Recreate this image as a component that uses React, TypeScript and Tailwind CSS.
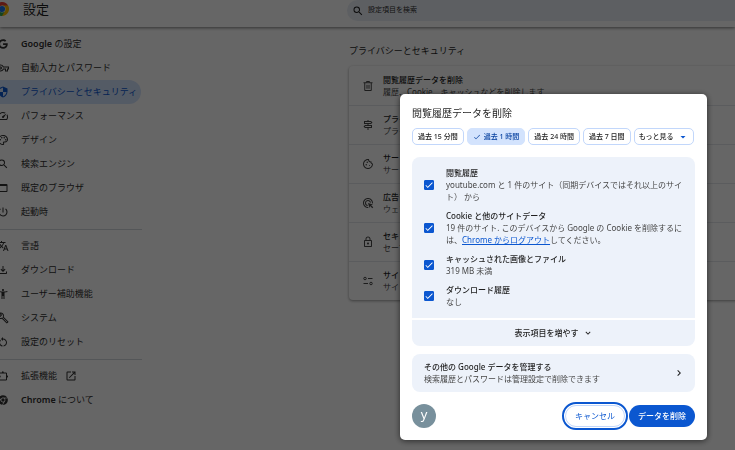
import React from 'react'
import {
  MdAccessibilityNew,
  MdAdsClick,
  MdArrowDropDown,
  MdCheck,
  MdKeyboardArrowDown,
  MdKeyboardArrowRight,
  MdLockOutline,
  MdOpenInNew,
  MdOutlineBuild,
  MdOutlineCookie,
  MdOutlineFileDownload,
  MdOutlinePalette,
  MdOutlineSignpost,
  MdOutlineSpeed,
  MdOutlineVpnKey,
  MdOutlineWebAsset,
  MdPowerSettingsNew,
  MdRestartAlt,
  MdSearch,
  MdSecurity,
  MdTranslate,
} from 'react-icons/md'
import { FaChrome, FaGoogle } from 'react-icons/fa'

type IconType = React.ComponentType<{ className?: string }>

interface NavItem {
  brand?: string
  label: string
  icon: IconType
  active?: boolean
  external?: boolean
}

const GoogleIcon: IconType = ({ className }) => <FaGoogle className={`${className} p-px`} />
const AboutIcon: IconType = ({ className }) => <FaChrome className={`${className} p-px`} />

const ExtensionIcon: IconType = ({ className }) => (
  <svg viewBox="0 0 24 24" className={className} fill="none" stroke="currentColor" strokeWidth="2">
    <path d="M4 6h15v14H4v-4.5a2.5 2.5 0 0 0 0-5z" strokeLinejoin="round" />
    <path d="M9.5 5.5a2 2 0 0 1 4 0zM19.5 11a2 2 0 0 1 0 4z" fill="currentColor" stroke="none" />
    <path d="M11.5 3v3M19 13h3" strokeWidth="3" />
  </svg>
)

const TrashIcon: IconType = ({ className }) => (
  <svg viewBox="0 0 24 24" className={className} fill="none" stroke="currentColor" strokeWidth="2">
    <path d="M3 5.500h18M9 5V3h6v2M5.500 6v15h13V6M10 9.500v8M14 9.500v8" />
  </svg>
)

const SiteSettingsIcon: IconType = ({ className }) => (
  <svg viewBox="0 0 24 24" className={className} fill="none" stroke="currentColor" strokeWidth="2">
    <circle cx="6" cy="7" r="2.5" />
    <path d="M12 7h9M3 17h9" />
    <circle cx="18" cy="17" r="2.5" />
  </svg>
)

const ChromeLogo = () => (
  <svg viewBox="0 0 48 48" className="size-[14px] shrink-0">
    <path d="M24 24 3.2 12A24 24 0 0 1 44.8 12z" fill="#ea4335" />
    <path d="M24 24 44.8 12A24 24 0 0 1 24 48z" fill="#fbbc04" />
    <path d="M24 24v24A24 24 0 0 1 3.2 12z" fill="#34a853" />
    <path d="M24 12h20.8L34.4 30z" fill="#fbbc04" />
    <path d="M34.4 30 24 48 13.6 30z" fill="#34a853" />
    <path d="M3.2 12 13.6 30 24 12z" fill="#ea4335" />
    <circle cx="24" cy="24" r="12" fill="#fff" />
    <circle cx="24" cy="24" r="10.5" fill="#1a73e8" />
  </svg>
)

const NAV_GROUPS: NavItem[][] = [
  [
    { brand: 'Google', label: ' の設定', icon: GoogleIcon },
    { label: '自動入力とパスワード', icon: MdOutlineVpnKey },
    { label: 'プライバシーとセキュリティ', icon: MdSecurity, active: true },
    { label: 'パフォーマンス', icon: MdOutlineSpeed },
    { label: 'デザイン', icon: MdOutlinePalette },
    { label: '検索エンジン', icon: MdSearch },
    { label: '既定のブラウザ', icon: MdOutlineWebAsset },
    { label: '起動時', icon: MdPowerSettingsNew },
  ],
  [
    { label: '言語', icon: MdTranslate },
    { label: 'ダウンロード', icon: MdOutlineFileDownload },
    { label: 'ユーザー補助機能', icon: MdAccessibilityNew },
    { label: 'システム', icon: MdOutlineBuild },
    { label: '設定のリセット', icon: MdRestartAlt },
  ],
  [
    { label: '拡張機能', icon: ExtensionIcon, external: true },
    { brand: 'Chrome', label: ' について', icon: AboutIcon },
  ],
]

const PRIVACY_ROWS: { title: string; text: string; icon: IconType }[] = [
  { title: '閲覧履歴データを削除', text: '履歴、Cookie、キャッシュなどを削除します', icon: TrashIcon },
  { title: 'プライバシー ガイド', text: 'プライバシーの設定を確認します', icon: MdOutlineSignpost },
  { title: 'サードパーティ Cookie', text: 'サードパーティの Cookie の設定', icon: MdOutlineCookie },
  { title: '広告プライバシー', text: 'ウェブサイトの広告に関する設定', icon: MdAdsClick },
  { title: 'セキュリティ', text: 'セーフ ブラウジングなどの設定', icon: MdLockOutline },
  { title: 'サイトの設定', text: 'サイトが使用できる情報の設定', icon: SiteSettingsIcon },
]

const RANGES = ['過去 15 分間', '過去 1 時間', '過去 24 時間', '過去 7 日間']

const DATA_TYPES: { id: string; title: string; text: React.ReactNode }[] = [
  {
    id: 'history',
    title: '閲覧履歴',
    text: 'youtube.com と 1 件のサイト（同期デバイスではそれ以上のサイト） から',
  },
  {
    id: 'cookies',
    title: 'Cookie と他のサイトデータ',
    text: (
      <>
        19 件のサイト. このデバイスから Google の Cookie を削除するには、
        <a href="#logout" className="text-[#0b57d0] underline">
          Chrome からログアウト
        </a>
        してください。
      </>
    ),
  },
  { id: 'cache', title: 'キャッシュされた画像とファイル', text: '319 MB 未満' },
  { id: 'downloads', title: 'ダウンロード履歴', text: 'なし' },
]

const Header = () => (
  <header className="grid grid-cols-[347px_1fr] items-start overflow-hidden pb-[6px] shadow-[0_1px_3px_rgba(0,0,0,0.5)]">
    <div className="-ml-[5px] flex items-center gap-[14px] pt-px">
      <ChromeLogo />
      <h1 className="text-[13px] leading-4">設定</h1>
    </div>
    <label className="-mr-6 flex h-[21px] items-center gap-1 rounded-full bg-[#e9eef6] pl-[5px]">
      <MdSearch className="size-3" />
      <input
        type="search"
        aria-label="設定項目を検索"
        placeholder="設定項目を検索"
        className="flex-1 bg-transparent text-[7px] outline-none placeholder:text-[#303030]"
      />
    </label>
  </header>
)

const Sidebar = () => (
  <nav className="w-[142px] pt-[5px]">
    {NAV_GROUPS.map((group, i) => (
      <ul key={i} className={i > 0 ? 'mt-[5px] border-t border-[#d3d7dc] pt-1' : ''}>
        {group.map(({ brand, label, icon: Icon, active, external }) => (
          <li key={label}>
            <a
              href="#settings"
              className={`-ml-3 mr-px flex h-6 items-center rounded-r-full pl-[9px] text-[9px] ${
                active ? 'bg-[#d3e3fd] text-[#0b57d0]' : 'text-[#303030]'
              }`}
            >
              <Icon className="mr-3 size-3 shrink-0" />
              <span className="whitespace-pre">
                {brand && <span className="font-semibold">{brand}</span>}
                {label}
              </span>
              {external && <MdOpenInNew className="ml-2 size-3" />}
            </a>
          </li>
        ))}
      </ul>
    ))}
  </nav>
)

const PrivacySection = () => (
  <main className="-mr-6 pl-[2px] pt-4">
    <h2 className="text-[9px] leading-4">プライバシーとセキュリティ</h2>
    <ul className="mt-[7px] rounded shadow-[0_1px_3px_rgba(0,0,0,0.4)]">
      {PRIVACY_ROWS.map(({ title, text, icon: Icon }, i) => (
        <li
          key={title}
          className={`flex h-[39px] items-center gap-[9px] pl-[13px] text-[8px] leading-3 ${
            i > 0 ? 'border-t border-[#e3e6ea]' : ''
          }`}
        >
          <Icon className="size-3 text-[#474747]" />
          <div>
            <p className="font-medium">{title}</p>
            <p className="text-[#474747]">{text}</p>
          </div>
        </li>
      ))}
    </ul>
  </main>
)

const RangeChips = () => (
  <div className="mt-2 flex gap-[3px] text-[7px] font-medium">
    {RANGES.map((range) => {
      const selected = range === '過去 1 時間'
      return (
        <button
          key={range}
          aria-pressed={selected}
          className={`flex h-[17px] items-center gap-[3px] whitespace-nowrap rounded-[5px] border px-[5px] ${
            selected ? 'border-[#d3e3fd] bg-[#d3e3fd] text-[#0842a0]' : 'border-[#c2d7fb]'
          }`}
        >
          {selected && <MdCheck className="size-2" />}
          {range}
        </button>
      )
    })}
    <button className="flex h-[17px] items-center gap-[3px] whitespace-nowrap rounded-[5px] border border-[#c2d7fb] px-1">
      もっと見る
      <MdArrowDropDown className="size-3 text-[#0b57d0]" />
    </button>
  </div>
)

const DataTypeRow: React.FC<{ id: string; title: string; text: React.ReactNode }> = ({ id, title, text }) => (
  <li className="flex items-center gap-3">
    <span className="grid size-[10px] shrink-0">
      <input
        id={id}
        type="checkbox"
        defaultChecked
        aria-describedby={`${id}-text`}
        className="peer col-start-1 row-start-1 size-[10px] appearance-none rounded-[1px] border border-[#0b57d0] checked:bg-[#0b57d0]"
      />
      <MdCheck className="pointer-events-none col-start-1 row-start-1 hidden size-[10px] text-white peer-checked:block" />
    </span>
    <div>
      <label htmlFor={id} className="block font-medium">
        {title}
      </label>
      <p id={`${id}-text`} className="text-[#474747]">
        {text}
      </p>
    </div>
  </li>
)

const ClearDataDialog = () => (
  <div className="fixed inset-0 flex items-start justify-end overflow-y-auto bg-black/60 pr-7 pt-[94px]">
    <div
      role="dialog"
      aria-labelledby="dialog-title"
      className="w-[307px] rounded-[5px] bg-white p-3 text-[8px] leading-3 shadow-[0_1px_6px_rgba(0,0,0,0.6)]"
    >
      <h2 id="dialog-title" className="text-[10px] leading-[14px]">
        閲覧履歴データを削除
      </h2>
      <RangeChips />

      <ul className="mt-3 space-y-[7px] rounded-t-lg bg-[#edf2fa] px-3 py-[10px]">
        {DATA_TYPES.map((item) => (
          <DataTypeRow key={item.id} {...item} />
        ))}
      </ul>
      <button className="mt-[2px] flex h-[26px] w-full items-center justify-center gap-1 rounded-b-lg bg-[#edf2fa] font-medium">
        表示項目を増やす
        <MdKeyboardArrowDown className="size-[10px]" />
      </button>

      <button className="mt-2 flex w-full items-center justify-between rounded-lg bg-[#edf2fa] py-[7px] pl-3 pr-[10px] text-left">
        <span>
          <span className="block font-medium">その他の Google データを管理する</span>
          <span className="block text-[#474747]">検索履歴とパスワードは管理設定で削除できます</span>
        </span>
        <MdKeyboardArrowRight className="size-3" />
      </button>

      <div className="mt-3 flex items-center">
        <div className="flex size-6 items-center justify-center rounded-full bg-[#78909c] pb-1 text-[13px] text-white">
          y
        </div>
        <button className="ml-auto h-[22px] rounded-full border border-[#c2d7fb] px-[9px] text-[#0b57d0] outline-2 outline-offset-1 outline-[#0b57d0]">
          キャンセル
        </button>
        <button className="ml-1 h-[22px] rounded-full bg-[#0b57d0] px-[9px] font-medium text-white">データを削除</button>
      </div>
    </div>
  </div>
)

const App = () => (
  <div
    lang="ja"
    className="min-h-screen overflow-hidden bg-white font-['Noto_Sans','Noto_Sans_CJK_JP',sans-serif] text-[#1f1f1f]"
  >
    <Header />
    <div className="grid grid-cols-[347px_1fr]">
      <Sidebar />
      <PrivacySection />
    </div>
    <ClearDataDialog />
  </div>
)

export default App
